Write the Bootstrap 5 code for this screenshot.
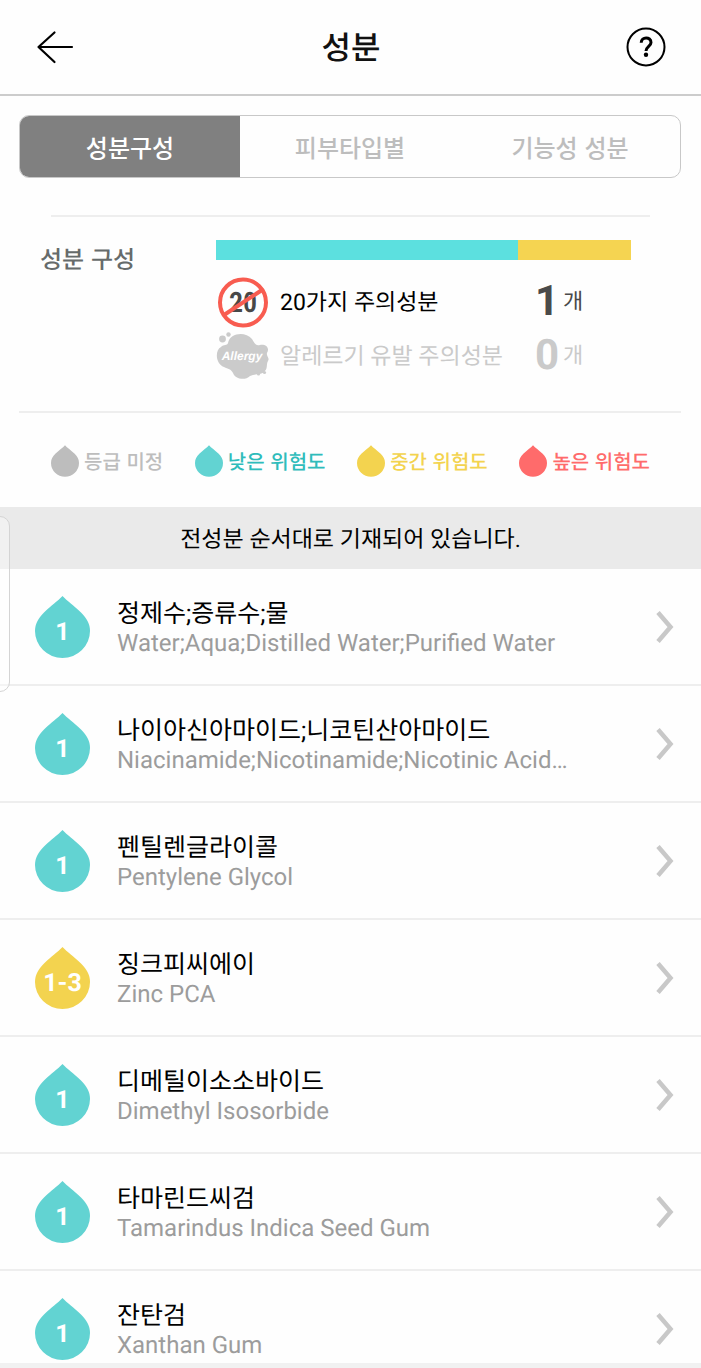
<!DOCTYPE html>
<html lang="ko">
<head>
<meta charset="utf-8">
<meta name="viewport" content="width=device-width, initial-scale=1">
<title>성분</title>
<link href="https://cdn.jsdelivr.net/npm/bootstrap@5.3.0/dist/css/bootstrap.min.css" rel="stylesheet">
<style>
  :root { --low: #62d3d2; --mid: #f3d34f; --high: #ff6b6b; --none: #bdbdbd; }
  body { font-family: Roboto, "Noto Sans CJK KR", sans-serif; background: #fefefe; color: #000; text-rendering: geometricPrecision; }
  .ko { font-family: "Noto Sans CJK KR", sans-serif; }
  .topbar { height: 96px; border-bottom: 2px solid #ccc; padding: 0 35px 0 36px; }
  .topbar h1 { font-size: 32px; line-height: 40px; font-weight: 500; color: #111; padding-bottom: 2px; }
  .icon-btn { line-height: 0; color: #000; }
  .tabs { margin: 19px 20px 0 19px; height: 63px; border: 1px solid #c8c8c8; border-radius: 10px; overflow: hidden; }
  .tabs button { flex: 1 1 0; border: 0; border-radius: 0; padding: 0; background: transparent; color: #bdbdbd; font-size: 24px; line-height: 32px; font-weight: 500; }
  .tabs button.active { background: #808080; color: #fff; }
  .rule { height: 2px; background: #eee; }
  .rule-short { margin: 37px 51px 0; }
  .rule-wide { margin: 0 20px 0 19px; }
  .summary { padding: 23px 70px 0 40px; height: 194px; }
  .summary h2 { width: 176px; font-size: 24px; line-height: 36px; font-weight: 500; color: #666b6b; }
  .ratio-bar { height: 20px; margin-bottom: 15px; }
  .stat { height: 54px; font-size: 23px; line-height: 32px; }
  .stat svg { width: 54px; height: 54px; margin-right: 10px; }
  .stat .label { padding-top: 2px; }
  .stat .count { width: 96px; color: #4a4a4a; }
  .stat .count strong { width: 28px; font-size: 42px; line-height: 48px; }
  .stat.off, .stat.off .count { color: #cacaca; }
  .unit { font-size: 22px; padding-top: 2px; }
  .legend { height: 94px; padding: 2px 51px 0; font-size: 20px; line-height: 30px; font-weight: 500; }
  .legend svg { width: 28px; height: 32px; margin-right: 5px; }
  .notice { height: 62px; padding-top: 4px; background: #eaeaea; font-size: 23px; line-height: 32px; }
  .ingredient { height: 117px; border-bottom: 2px solid #eee; padding: 0 27px 0 35px; color: #000; }
  .drop { width: 55px; height: 62px; flex: none; margin-right: 27px; }
  .drop text { font: 700 25px Roboto, sans-serif; fill: #fff; }
  .ingredient .title { font-size: 25px; line-height: 30px; color: #000; padding-top: 2px; }
  .ingredient .sub { font-size: 24px; line-height: 26px; color: #9c9c9c; }
  .chev { width: 18px; height: 34px; flex: none; }
  .footstrip { height: 5px; background: #f1f1f1; }
  .edge-handle { left: -1px; top: 516px; width: 11px; height: 176px; border: 1px solid #d4d4d4; border-radius: 0 10px 10px 0; background: rgba(255,255,255,.35); }
</style>
</head>
<body class="vh-100 d-flex flex-column overflow-hidden position-relative">
<svg class="d-none">
  <symbol id="drop" viewBox="0 0 55 62"><path d="M27.500 0C32 5 39 9.500 46 16.500C52 22.500 55 28 55 35A27.500 27 0 0 1 0 35C0 28 3 22.500 9 16.500C16 9.500 23 5 27.500 0Z" fill="currentColor"/></symbol>
  <symbol id="chev" viewBox="0 0 18 34"><path d="M2 2.500L14.500 17L2 31.500" fill="none" stroke="#c8c8c8" stroke-width="4.500"/></symbol>
</svg>

<header class="topbar ko d-flex align-items-center justify-content-between flex-shrink-0">
  <button type="button" class="btn p-0 border-0 icon-btn" aria-label="뒤로"><svg width="40" height="40" viewBox="0 0 40 40" fill="none" stroke="#000" stroke-width="2.200" stroke-linecap="round" stroke-linejoin="round"><path d="M36 20H2.500M18.500 5.500L2.500 20L18.500 35"/></svg></button>
  <h1 class="m-0">성분</h1>
  <button type="button" class="btn p-0 border-0 icon-btn" aria-label="도움말"><svg width="40" height="40" viewBox="0 0 40 40" fill="none" stroke="#000"><circle cx="20" cy="20" r="18.500" stroke-width="2"/><path d="M15.200 15.800C15.200 9.400 25 9.400 25 15.400C25 19.200 20 19.500 20 24" stroke-width="3"/><circle cx="20" cy="27.800" r="2.200" fill="#000" stroke="none"/></svg></button>
</header>

<nav class="tabs ko d-flex flex-shrink-0">
  <button type="button" class="btn active">성분구성</button>
  <button type="button" class="btn">피부타입별</button>
  <button type="button" class="btn">기능성 성분</button>
</nav>

<div class="rule rule-short flex-shrink-0"></div>
<section class="summary d-flex flex-shrink-0">
  <h2 class="ko m-0 flex-shrink-0">성분 구성</h2>
  <div class="flex-grow-1">
    <div class="ratio-bar d-flex">
      <div style="width:72.8%;background:#5ce0df"></div>
      <div style="width:27.2%;background:#f5d451"></div>
    </div>
    <div class="stat d-flex align-items-center">
      <svg viewBox="0 0 54 54"><text x="27" y="37" text-anchor="middle" font-family="Roboto Condensed, Liberation Sans Narrow, Roboto, sans-serif" font-weight="600" font-size="28" fill="#484848">20</text><circle cx="27" cy="27.500" r="23" fill="none" stroke="#f85c50" stroke-width="4"/><path d="M8 40L46 15" stroke="#f85c50" stroke-width="4"/></svg>
      <span class="label me-auto">20가지 주의성분</span>
      <span class="count d-flex align-items-center"><strong>1</strong><span class="unit">개</span></span>
    </div>
    <div class="stat off d-flex align-items-center">
      <svg viewBox="0 0 54 54"><g fill="#cbcbcb"><path d="M12 14C14 4 29 2 36 10C39 15 40 17 44 16C50 15 54 19 51 24C50 27 54 29 52 32C50 35 52 39 49 42C45 47 39 44 34 47C29 52 19 50 17 44C15 40 12 40 8 38C-1 34 -1 21 5 18C8 15 11 17 12 14Z"/><circle cx="6.500" cy="10" r="3.400"/><circle cx="12.500" cy="5.500" r="2.200"/><circle cx="42.500" cy="45" r="1.600"/><circle cx="48.500" cy="43.500" r="1.600"/></g><text x="26" y="31" text-anchor="middle" font-family="Liberation Sans, sans-serif" font-style="italic" font-weight="700" font-size="12" fill="#fff">Allergy</text></svg>
      <span class="label me-auto">알레르기 유발 주의성분</span>
      <span class="count d-flex align-items-center"><strong>0</strong><span class="unit">개</span></span>
    </div>
  </div>
</section>
<div class="rule rule-wide flex-shrink-0"></div>

<div class="legend ko d-flex align-items-center justify-content-between flex-shrink-0">
  <span class="d-flex align-items-center" style="color:var(--none)"><svg><use href="#drop"/></svg>등급 미정</span>
  <span class="d-flex align-items-center" style="color:#2fbcbb"><svg style="color:var(--low)"><use href="#drop"/></svg>낮은 위험도</span>
  <span class="d-flex align-items-center" style="color:var(--mid)"><svg><use href="#drop"/></svg>중간 위험도</span>
  <span class="d-flex align-items-center" style="color:var(--high)"><svg><use href="#drop"/></svg>높은 위험도</span>
</div>

<div class="notice d-flex align-items-center justify-content-center flex-shrink-0">전성분 순서대로 기재되어 있습니다.</div>

<main class="flex-grow-1 overflow-hidden">
  <a href="#" class="ingredient d-flex align-items-center text-decoration-none"><svg class="drop" viewBox="0 0 55 62"><use href="#drop" color="#62d3d2"/><text x="27.500" y="44" text-anchor="middle">1</text></svg><span class="flex-grow-1"><span class="title d-block">정제수;증류수;물</span><span class="sub d-block">Water;Aqua;Distilled Water;Purified Water</span></span><svg class="chev"><use href="#chev"/></svg></a>
  <a href="#" class="ingredient d-flex align-items-center text-decoration-none"><svg class="drop" viewBox="0 0 55 62"><use href="#drop" color="#62d3d2"/><text x="27.500" y="44" text-anchor="middle">1</text></svg><span class="flex-grow-1"><span class="title d-block">나이아신아마이드;니코틴산아마이드</span><span class="sub d-block">Niacinamide;Nicotinamide;Nicotinic Acid…</span></span><svg class="chev"><use href="#chev"/></svg></a>
  <a href="#" class="ingredient d-flex align-items-center text-decoration-none"><svg class="drop" viewBox="0 0 55 62"><use href="#drop" color="#62d3d2"/><text x="27.500" y="44" text-anchor="middle">1</text></svg><span class="flex-grow-1"><span class="title d-block">펜틸렌글라이콜</span><span class="sub d-block">Pentylene Glycol</span></span><svg class="chev"><use href="#chev"/></svg></a>
  <a href="#" class="ingredient d-flex align-items-center text-decoration-none"><svg class="drop" viewBox="0 0 55 62"><use href="#drop" color="#f3d34f"/><text x="27.500" y="44" text-anchor="middle">1-3</text></svg><span class="flex-grow-1"><span class="title d-block">징크피씨에이</span><span class="sub d-block">Zinc PCA</span></span><svg class="chev"><use href="#chev"/></svg></a>
  <a href="#" class="ingredient d-flex align-items-center text-decoration-none"><svg class="drop" viewBox="0 0 55 62"><use href="#drop" color="#62d3d2"/><text x="27.500" y="44" text-anchor="middle">1</text></svg><span class="flex-grow-1"><span class="title d-block">디메틸이소소바이드</span><span class="sub d-block">Dimethyl Isosorbide</span></span><svg class="chev"><use href="#chev"/></svg></a>
  <a href="#" class="ingredient d-flex align-items-center text-decoration-none"><svg class="drop" viewBox="0 0 55 62"><use href="#drop" color="#62d3d2"/><text x="27.500" y="44" text-anchor="middle">1</text></svg><span class="flex-grow-1"><span class="title d-block">타마린드씨검</span><span class="sub d-block">Tamarindus Indica Seed Gum</span></span><svg class="chev"><use href="#chev"/></svg></a>
  <a href="#" class="ingredient d-flex align-items-center text-decoration-none"><svg class="drop" viewBox="0 0 55 62"><use href="#drop" color="#62d3d2"/><text x="27.500" y="44" text-anchor="middle">1</text></svg><span class="flex-grow-1"><span class="title d-block">잔탄검</span><span class="sub d-block">Xanthan Gum</span></span><svg class="chev"><use href="#chev"/></svg></a>
</main>
<div class="footstrip flex-shrink-0"></div>
<div class="edge-handle position-absolute"></div>
<script src="https://cdn.jsdelivr.net/npm/bootstrap@5.3.0/dist/js/bootstrap.bundle.min.js"></script>
</body>
</html>
